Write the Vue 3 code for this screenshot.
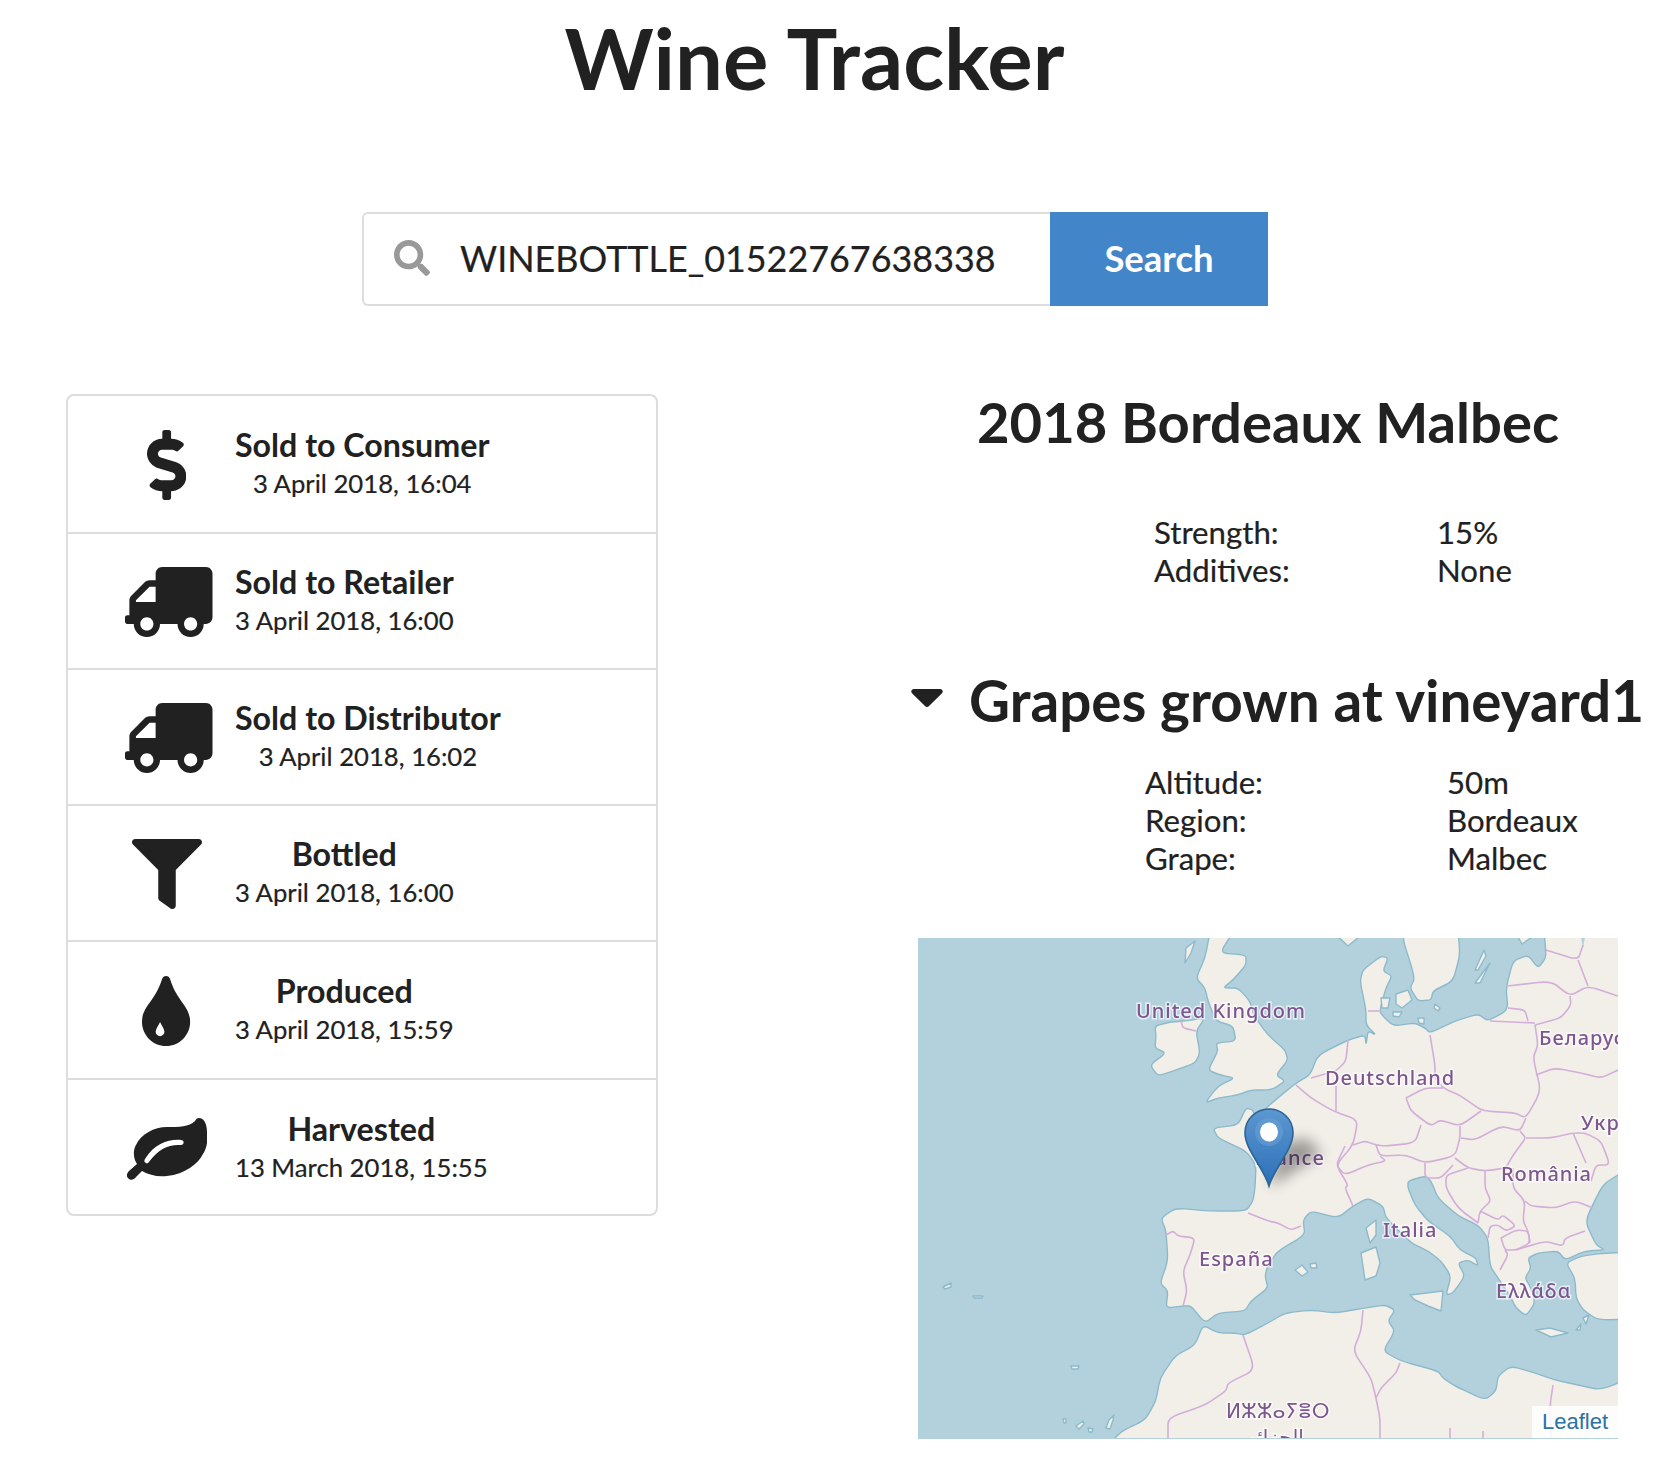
<script setup>
const steps = [
  { icon: 'dollar', title: 'Sold to Consumer', date: '3 April 2018, 16:04' },
  { icon: 'truck', title: 'Sold to Retailer', date: '3 April 2018, 16:00' },
  { icon: 'truck', title: 'Sold to Distributor', date: '3 April 2018, 16:02' },
  { icon: 'filter', title: 'Bottled', date: '3 April 2018, 16:00' },
  { icon: 'tint', title: 'Produced', date: '3 April 2018, 15:59' },
  { icon: 'leaf', title: 'Harvested', date: '13 March 2018, 15:55' },
]
const icons = {
  dollar: { w: 288, h: 512, d: 'M209.2 233.4l-108-31.6C88.7 198.2 80 186.5 80 173.5c0-16.3 13.2-29.5 29.5-29.5h66.3c12.2 0 24.2 3.7 34.2 10.5 6.1 4.1 14.3 3.1 19.5-2l34.8-34c7.1-6.9 6.1-18.4-1.8-24.5C238 74.8 207.4 64.1 176 64V16c0-8.8-7.2-16-16-16h-32c-8.8 0-16 7.2-16 16v48h-2.5C45.8 64-5.4 118.7.5 183.6c4.2 46.1 39.4 83.6 83.8 96.6l102.5 30c12.5 3.7 21.2 15.3 21.2 28.3 0 16.3-13.2 29.5-29.5 29.5h-66.3C100 368 88 364.3 78 357.5c-6.1-4.1-14.3-3.1-19.5 2l-34.8 34c-7.1 6.9-6.1 18.4 1.8 24.5 24.5 19.2 55.1 29.9 86.5 30v48c0 8.8 7.2 16 16 16h32c8.8 0 16-7.2 16-16v-48.2c46.6-.9 90.3-28.6 105.7-72.7 21.5-61.6-14.6-124.8-72.5-141.7z' },
  truck: { w: 640, h: 512, flip: true, d: 'M624 352h-16V243.9c0-12.7-5.1-24.9-14.1-33.9L494 110.1c-9-9-21.2-14.1-33.9-14.1H416V48c0-26.5-21.5-48-48-48H48C21.5 0 0 21.5 0 48v320c0 26.5 21.5 48 48 48h16c0 53 43 96 96 96s96-43 96-96h128c0 53 43 96 96 96s96-43 96-96h48c8.8 0 16-7.2 16-16v-32c0-8.8-7.2-16-16-16zM160 464c-26.5 0-48-21.5-48-48s21.5-48 48-48 48 21.5 48 48-21.5 48-48 48zm320 0c-26.5 0-48-21.5-48-48s21.5-48 48-48 48 21.5 48 48-21.5 48-48 48zm80-208H416V144h44.1l99.9 99.9V256z' },
  filter: { w: 512, h: 512, d: 'M487.976 0H24.028C2.71 0-8.047 25.866 7.058 40.971L192 225.941V432c0 7.831 3.821 15.17 10.237 19.662l80 55.98C298.02 518.69 320 507.493 320 487.98V225.941l184.947-184.97C520.021 25.896 509.338 0 487.976 0z' },
  tint: { w: 352, h: 512, d: 'M205.22 22.09c-7.94-28.78-49.44-30.12-58.44 0C100.01 179.85 0 222.72 0 333.91 0 432.35 78.72 512 176 512s176-79.65 176-178.09c0-111.75-99.79-153.34-146.78-311.82zM132 336c10 25 32 50 32 72a32 32 0 0 1-64 0c0-22 22-47 32-72z' },
  leaf: { w: 80, h: 62, d: 'M72 0C77 0 80 6 80 14C81 22 80 30 76 36C71 46 58 56 40 58C30 59 22 57 15 53L9 59C7 62 3 63 1 60C-1 58 0 55 2 53L10 46C6 40 6 32 9 27C14 16 27 9 40 9C52 9 62 9 68 3C69 1 70 0 72 0ZM54 22C42 21 28 25 18 41C17 43 17 44 19 45C20 46 21 45 22 44C31 31 42 26 54 27C57 27 58 22 54 22Z' },
}
const wine = [['Strength:', '15%'], ['Additives:', 'None']]
const vineyard = [['Altitude:', '50m'], ['Region:', 'Bordeaux'], ['Grape:', 'Malbec']]

// Coastlines are noted as point lists; their corners get slightly rounded.
const CUT = 0.3
function pts(s) {
  return s.trim().split(/\s+/).map((p) => p.split(',').map(Number))
}
const toward = (a, b, t) => [a[0] + (b[0] - a[0]) * t, a[1] + (b[1] - a[1]) * t]
const fmt = (p) => `${p[0].toFixed(1)} ${p[1].toFixed(1)}`
function closedCurve(s) {
  const p = pts(s)
  const n = p.length
  if (n < 7) return 'M' + p.map(fmt).join('L') + 'Z'
  let d = ''
  p.forEach((q, i) => {
    const a = toward(q, p[(i + n - 1) % n], CUT)
    const b = toward(q, p[(i + 1) % n], CUT)
    d += (i ? 'L' : 'M') + fmt(a) + 'Q' + fmt(q) + ' ' + fmt(b)
  })
  return d + 'Z'
}
function openCurve(s) {
  const p = pts(s)
  let d = 'M' + fmt(p[0])
  for (let i = 1; i < p.length - 1; i++) {
    d += 'L' + fmt(toward(p[i], p[i - 1], CUT)) + 'Q' + fmt(p[i]) + ' ' + fmt(toward(p[i], p[i + 1], CUT))
  }
  return d + 'L' + fmt(p[p.length - 1])
}

const land = [
  // Great Britain
  '292,-6 315,-6 302,15 328,17 328,27 315,42 305,50 320,50 332,63 336,78 350,97 367,112 370,122 358,137 367,143 357,150 350,152 333,152 320,157 300,160 287,165 300,148 317,140 302,137 290,132 300,113 298,105 318,103 315,88 298,83 290,63 287,50 278,40 287,20',
  // Ireland
  '237,88 252,84 267,83 287,80 278,93 282,115 277,125 258,132 240,138 232,127 248,115 237,110 238,98',
  // Hebrides
  '277,3 268,10 267,25 273,15',
  // Mainland Europe
  '295,190 320,187 328,170 335,172 338,183 350,168 378,145 392,137 400,117 430,102 447,97 448,107 450,93 458,97 448,87 448,72 442,43 445,32 463,18 470,20 465,33 474,38 468,50 463,67 462,75 475,88 497,85 507,90 512,95 537,83 560,76 570,83 590,72 588,50 595,23 610,17 620,30 628,20 627,3 625,-12 725,-12 725,222 690,243 683,250 667,283 678,307 687,312 667,313 647,322 640,313 620,315 610,320 613,330 607,340 613,350 617,365 608,378 598,370 592,358 580,340 572,328 570,300 560,287 540,278 520,260 513,243 507,238 490,243 490,250 497,267 510,283 532,298 542,312 558,320 560,328 550,322 540,325 547,338 535,355 528,357 533,338 523,323 510,313 493,305 468,280 465,268 450,260 435,268 420,280 393,273 385,282 387,297 360,313 350,327 347,338 350,350 333,363 327,373 300,375 287,385 273,368 265,368 248,370 250,353 242,345 250,323 248,293 243,280 258,270 290,273 328,273 335,263 337,250 338,227 328,213 300,200',
  // Scandinavia
  '482,-8 497,40 492,50 500,63 513,62 515,53 535,43 542,17 540,-8',
  '415,-6 430,8 447,-6',
  // Baltic islands
  '557,45 572,25 562,45',
  '557,32 566,12 568,18 560,32',
  '600,-1 614,-1 604,6',
  // Danish islands
  '463,60 472,60 470,70 464,70',
  '478,56 490,52 494,62 484,70 478,66',
  '475,74 484,74 481,79 475,78',
  '517,66 522,70 520,73 516,70',
  '500,80 506,80 506,86 501,85',
  // Africa
  '285,387 277,407 257,418 242,440 238,463 227,482 200,495 180,525 725,525 725,435 683,452 660,447 637,442 617,435 593,428 580,438 578,453 567,462 537,448 525,440 520,433 483,423 465,413 477,393 470,383 477,372 467,367 447,370 417,375 393,372 367,375 350,385 327,397 317,395 300,395',
  // Turkey
  '725,314 687,315 663,318 648,325 657,340 658,360 665,372 680,382 725,381',
  // Mediterranean islands
  '492,357 525,353 523,373 510,368 497,362',
  '443,315 458,309 462,325 458,338 447,342',
  '448,290 458,282 458,297 452,305',
  '377,332 384,327 390,334 384,338',
  '392,326 398,325 399,330 393,330',
  '618,392 632,390 650,395 633,399',
  '658,392 663,386 662,392',
  '665,380 671,377 668,386',
  // Azores, Madeira, Canaries
  '25,349 33,345 33,349 27,351',
  '55,358 65,358 64,360 56,360',
  '153,428 161,428 160,431 154,431',
  '145,481 148,481 148,485 146,485',
  '158,488 165,483 166,486 161,491',
  '170,490 175,491 174,494 171,494',
  '188,490 191,482 196,477 195,482 192,491',
].map(closedCurve)

const borders = [
  '378,147 393,160 415,173 440,182 435,207 418,227 430,247 427,250 435,268',
  '430,102 428,123 418,133 393,140',
  '418,148 418,173',
  '450,73 463,73',
  '512,97 517,127 517,140 525,150 543,158 560,170 567,173 597,175 608,180 623,153 615,120 620,107 617,87',
  '572,83 617,85',
  '590,70 607,72 610,83',
  '590,48 633,43 652,58 670,48 700,58',
  '617,87 643,80 653,67 652,58',
  '628,12 660,22 665,7',
  '660,22 670,48',
  '618,137 637,130 663,135 683,140 700,132',
  '488,160 507,150 525,150',
  '488,160 493,173 513,188 522,182 542,188 563,173',
  '503,187 497,205 467,208 458,207 447,203 435,207',
  '458,207 462,218 488,217 507,225 537,218 542,200 542,188',
  '427,208 418,227 427,237 450,227 468,223 462,218',
  '543,200 557,202 583,188 602,193 608,180',
  '602,193 608,200 595,217 588,230 567,233 550,230 537,220',
  '608,200 633,200 655,195 667,195 683,203 692,227 678,227 673,243',
  '655,195 668,225',
  '507,225 507,240 523,240 535,227',
  '550,230 528,237 528,250 540,270 560,285',
  '567,233 567,250 573,263 562,273 560,285',
  '595,230 595,250 607,263 605,283 610,293 612,305',
  '562,273 580,282 585,277 598,288 588,293 580,287 572,288 570,300',
  '583,300 598,292 610,293 612,305 598,312 587,312 583,300',
  '587,312 590,317 582,332',
  '598,312 627,303 645,308 647,300 667,293',
  '607,263 613,268 637,270 657,263 675,270',
  '330,275 350,283 360,285 373,292 383,288',
  '248,297 255,293 260,298 277,300 272,317 265,333 269,353 265,368',
  '325,397 337,432 310,445 308,453 287,467 250,480 250,500',
  '445,372 443,393 435,413 453,440 458,460 462,480 462,500',
  '482,425 478,435 463,450 458,460',
  '635,447 632,467 633,500',
  '263,83 265,90 278,93',
  '532,490 532,500',
  '565,493 565,500',
].map(openCurve)

const labels = [
  { text: 'United Kingdom', x: 218, y: 80, ls: 1 },
  { text: 'Deutschland', x: 407, y: 147, ls: 0.9 },
  { text: 'Беларусь', x: 621, y: 107, ls: 1 },
  { text: 'Україна', x: 663, y: 192, ls: 1 },
  { text: 'România', x: 583, y: 243, ls: 0.9 },
  { text: 'France', x: 337, y: 227, ls: 1 },
  { text: 'Italia', x: 465, y: 299, ls: 1 },
  { text: 'España', x: 281, y: 328, ls: 1 },
  { text: 'Ελλάδα', x: 578, y: 360, ls: 1 },
]
</script>

<template>
  <div class="page">
    <h1 class="title">Wine Tracker</h1>

    <form class="search" @submit.prevent>
      <div class="field">
        <svg class="search-icon" viewBox="0 0 512 512" aria-hidden="true">
          <path d="M505 442.700L405.300 343c-4.500-4.500-10.600-7-17-7H372c27.600-35.300 44-79.700 44-128C416 93.100 322.900 0 208 0S0 93.100 0 208s93.100 208 208 208c48.300 0 92.700-16.400 128-44v16.300c0 6.400 2.500 12.500 7 17l99.700 99.700c9.400 9.400 24.600 9.400 33.900 0l28.300-28.300c9.400-9.400 9.400-24.600.1-34zM208 336c-70.700 0-128-57.200-128-128 0-70.700 57.200-128 128-128 70.700 0 128 57.200 128 128 0 70.700-57.200 128-128 128z" />
        </svg>
        <span class="query">WINEBOTTLE_01522767638338</span>
      </div>
      <button class="search-btn" type="submit">Search</button>
    </form>

    <main class="columns">
      <section class="steps">
        <article v-for="(s, i) in steps" :key="i" class="step">
          <div class="step-icon">
            <svg :class="['icon', 'icon-' + s.icon]" :viewBox="`0 0 ${icons[s.icon].w} ${icons[s.icon].h}`" aria-hidden="true">
              <path :d="icons[s.icon].d" fill-rule="evenodd" :transform="icons[s.icon].flip ? `translate(${icons[s.icon].w} 0) scale(-1 1)` : undefined" />
            </svg>
          </div>
          <div class="step-text">
            <div class="step-title">{{ s.title }}</div>
            <div class="step-date">{{ s.date }}</div>
          </div>
        </article>
      </section>

      <section class="detail">
        <h2 class="wine-name">2018 Bordeaux Malbec</h2>
        <dl class="facts facts-wine">
          <template v-for="row in wine" :key="row[0]">
            <dt>{{ row[0] }}</dt>
            <dd>{{ row[1] }}</dd>
          </template>
        </dl>

        <h2 class="origin">
          <svg class="caret" viewBox="0 0 32 18" aria-hidden="true">
            <path d="M3 0H29C31.500 0 32.500 2.500 31 4.200L18 17C17 18.200 15 18.200 14 17L1 4.200C-.5 2.500.5 0 3 0Z" />
          </svg>
          <span>Grapes grown at vineyard1</span>
        </h2>
        <dl class="facts facts-vineyard">
          <template v-for="row in vineyard" :key="row[0]">
            <dt>{{ row[0] }}</dt>
            <dd>{{ row[1] }}</dd>
          </template>
        </dl>

        <div class="map">
          <svg class="tiles" viewBox="0 0 700 500" aria-label="Map of Europe">
            <rect width="700" height="500" fill="#b2d1dd" />
            <path v-for="(d, i) in land" :key="'l' + i" :d="d" class="land" />
            <path d="M663 -1L667 -1L665 10Z" fill="#b2d1dd" />
            <path v-for="(d, i) in borders" :key="'b' + i" :d="d" class="border" />
            <text v-for="l in labels" :key="l.text" :x="l.x" :y="l.y" :style="{ letterSpacing: l.ls + 'px' }" class="label">{{ l.text }}</text>
            <text x="308" y="480" class="label label-tifinagh">ⵍⵣⵣⴰⵢⴻⵔ</text>
            <text x="357" y="506" class="label label-arabic">الجزائر</text>
          </svg>

          <svg class="marker" viewBox="0 0 100 90" aria-hidden="true">
            <defs>
              <linearGradient id="pin" x1="0" y1="0" x2="0" y2="1">
                <stop offset="0" stop-color="#5c97d0" />
                <stop offset="1" stop-color="#2c6fb8" />
              </linearGradient>
              <filter id="soft" x="-30%" y="-30%" width="160%" height="160%">
                <feGaussianBlur stdDeviation="7" />
              </filter>
            </defs>
            <path d="M25 79L78 46L62 30L38 36Z" fill="#000" opacity=".36" filter="url(#soft)" />
            <path d="M25 78C20 60 1 42 1 25C1 11 12 1 25 1C38 1 49 11 49 25C49 42 30 60 25 78Z" fill="url(#pin)" stroke="#2c6595" stroke-width="1.600" />
            <circle cx="25" cy="24" r="14" fill="#6ba0d6" opacity=".55" />
            <ellipse cx="25" cy="24" rx="9" ry="9.500" fill="#fff" />
          </svg>

          <a class="attribution">Leaflet</a>
        </div>
      </section>
    </main>
  </div>
</template>

<style>
body {
  background: #fff;
}
</style>

<style scoped>
.page {
  width: 1664px;
  height: 1462px;
  overflow: hidden;
  font-family: Lato, "Open Sans", sans-serif;
  color: #212121;
}

.title {
  width: 1629px;
  margin: 0;
  padding-top: 7px;
  height: 212px;
  box-sizing: border-box;
  font-size: 85px;
  font-weight: 700;
  line-height: 100px;
  text-align: center;
}

.search {
  display: flex;
  width: 906px;
  height: 94px;
  margin: 0 0 88px 362px;
}

.field {
  flex: 1;
  display: flex;
  align-items: center;
  box-sizing: border-box;
  padding: 0 0 2px 30px;
  border: 2px solid #ddd;
  border-right: 0;
  border-radius: 6px 0 0 6px;
}

.search-icon {
  width: 36px;
  height: 36px;
  fill: #999;
  flex: none;
}

.query {
  margin-left: 30px;
  font-size: 35.900px;
  -webkit-text-stroke: 0.2px #212121;
}

.search-btn {
  width: 218px;
  border: 0;
  padding: 0 0 2px;
  background: #4285c9;
  color: #fff;
  font: 700 36.500px Lato, sans-serif;
}

.columns {
  display: flex;
  align-items: flex-start;
}

.steps {
  width: 592px;
  margin-left: 66px;
  box-sizing: border-box;
  border: 2px solid #ddd;
  border-radius: 8px;
}

.step {
  display: flex;
  align-items: center;
  box-sizing: border-box;
  height: 136px;
  padding: 0 0 2px 56px;
  border-bottom: 2px solid #ddd;
}

.step:nth-child(1) {
  height: 138px;
}

.step:nth-child(5) {
  height: 138px;
}

.step:last-child {
  height: 134px;
  padding-bottom: 0;
  border-bottom: 0;
}

.step-icon {
  display: flex;
  justify-content: center;
  width: 85px;
  margin-right: 26px;
  margin-top: 4px;
  flex: none;
}

.icon {
  display: block;
  height: 70px;
  fill: #212121;
  flex: none;
}

.icon-truck {
  margin-left: 5px;
}

.icon-leaf {
  height: 62px;
}

.step-text {
  text-align: center;
}

.step-title {
  font-size: 32.200px;
  font-weight: 700;
  line-height: 40px;
}

.step-date {
  font-size: 25.700px;
  line-height: 36px;
  -webkit-text-stroke: 0.2px #212121;
}

.detail {
  width: 700px;
  margin-left: 260px;
  flex: none;
}

.wine-name {
  margin: 0 0 63px;
  font-size: 56.200px;
  font-weight: 700;
  line-height: 56px;
  text-align: center;
}

.facts {
  display: grid;
  margin: 0;
  font-size: 31.200px;
  line-height: 38px;
  -webkit-text-stroke: 0.2px #212121;
}

.facts dt,
.facts dd {
  margin: 0;
}

.facts-wine {
  grid-template-columns: 283px auto;
  margin-left: 236px;
  margin-bottom: 83px;
}

.facts-vineyard {
  grid-template-columns: 302px auto;
  margin-left: 227px;
  margin-bottom: 61px;
}

.origin {
  display: flex;
  align-items: center;
  gap: 26px;
  width: 760px;
  margin: 0 0 35px -7px;
  font-size: 56.600px;
  font-weight: 700;
  line-height: 56px;
  white-space: nowrap;
}

.caret {
  width: 32px;
  height: 18px;
  fill: #212121;
  margin-top: -4px;
  flex: none;
}

.map {
  position: relative;
  width: 700px;
  height: 501px;
  overflow: hidden;
  background: #b2d1dd;
}

.tiles {
  display: block;
  width: 700px;
  height: 500px;
  filter: blur(0.6px);
}

.land {
  fill: #f2efe9;
  stroke: #8dbacb;
  stroke-width: 1.4;
  stroke-linejoin: round;
}

.border {
  fill: none;
  stroke: #d3aed8;
  stroke-width: 1.6;
  stroke-linejoin: round;
}

.label {
  font-family: "Noto Sans", sans-serif;
  font-size: 20px;
  font-weight: 500;
  fill: #7d5690;
  stroke: rgba(255, 255, 255, 0.65);
  stroke-width: 3px;
  paint-order: stroke;
}

.label-tifinagh {
  font-family: "DejaVu Sans", sans-serif;
  font-size: 20px;
}

.label-arabic {
  font-family: "DejaVu Sans", sans-serif;
  text-anchor: middle;
}

.marker {
  position: absolute;
  left: 326px;
  top: 170px;
  width: 100px;
  height: 90px;
}

.attribution {
  position: absolute;
  right: 0;
  bottom: 1px;
  box-sizing: border-box;
  width: 86px;
  height: 32px;
  padding-left: 10px;
  background: rgba(255, 255, 255, 0.85);
  color: #2a72a3;
  font: 22px/32px "Liberation Sans", Arial, sans-serif;
}
</style>
